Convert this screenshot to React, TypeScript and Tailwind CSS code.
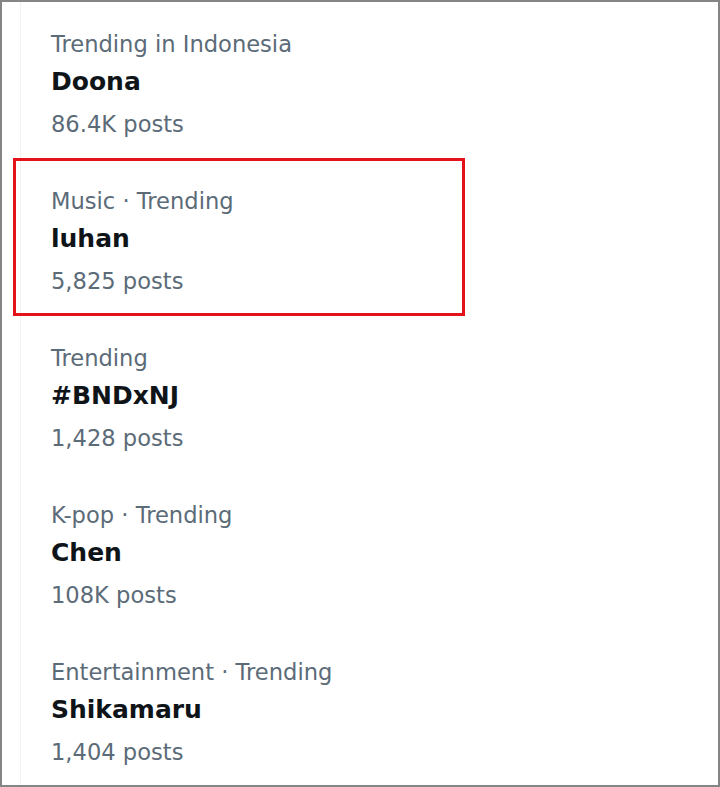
const TRENDS = [
  { category: "Trending in Indonesia", title: "Doona", posts: "86.4K posts" },
  { category: "Music · Trending", title: "luhan", posts: "5,825 posts", marked: true },
  { category: "Trending", title: "#BNDxNJ", posts: "1,428 posts" },
  { category: "K-pop · Trending", title: "Chen", posts: "108K posts" },
  { category: "Entertainment · Trending", title: "Shikamaru", posts: "1,404 posts" },
];

export default function App() {
  return (
    <div
      className="w-[720px] h-[787px] bg-white border-2 border-[#858585] overflow-hidden"
      style={{ fontFamily: '"DejaVu Sans", Inter, Arial, sans-serif' }}
    >
      <div className="ml-[18px] h-full border-l border-[#eff3f4]">
        {TRENDS.map((t) => (
          <div key={t.title} className="relative h-[157px] pt-[26px] pl-[30px]">
            {t.marked && (
              <div className="absolute left-[-8px] top-[-1px] w-[452px] h-[158px] border-[3px] border-[#e3121b]" />
            )}
            <div className="h-[32px] leading-[32px] text-[22.6px] text-[#5b6b78]">{t.category}</div>
            <div className="h-[44px] leading-[44px] text-[25px] font-bold text-[#0f1419]">{t.title}</div>
            <div className="h-[40px] leading-[40px] text-[22.6px] text-[#5b6b78]">{t.posts}</div>
          </div>
        ))}
      </div>
    </div>
  );
}
